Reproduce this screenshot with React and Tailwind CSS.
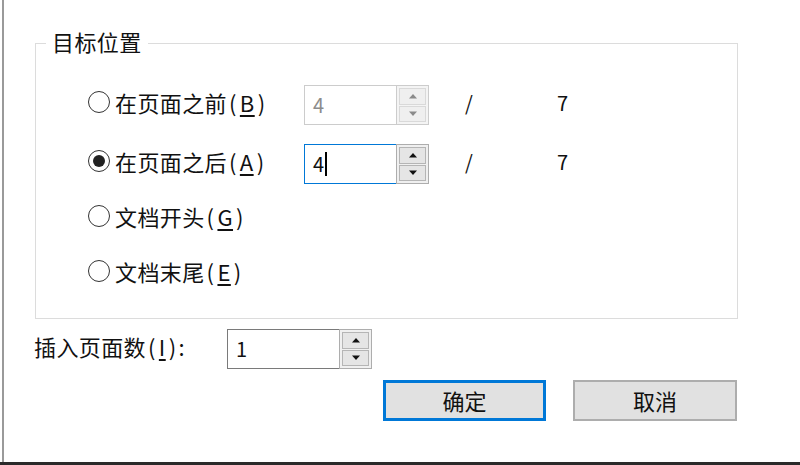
import React from "react";

const FONT = { fontFamily: '"Noto Sans CJK SC", "Noto Sans", sans-serif' };

function Tri({ up, disabled }) {
  return (
    <svg width="10" height="6" viewBox="0 0 10 6">
      {up ? (
        <polygon points="1,5.5 9,5.5 5,1" fill={disabled ? "#8a8a8a" : "#111"} />
      ) : (
        <polygon points="1,0.5 9,0.5 5,5" fill={disabled ? "#8a8a8a" : "#111"} />
      )}
    </svg>
  );
}

function Spin({ value, disabled, focused, width = "w-[125px]", caret }) {
  return (
    <div className={`flex h-[40px] ${width} bg-white`}>
      <div
        className={`flex-1 flex items-center pl-[8px] border ${
          focused ? "border-[#0078d7] border-r-0" : disabled ? "border-[#cccccc] border-r-0" : "border-[#7a7a7a] border-r-0"
        } text-[20px] ${disabled ? "text-[#8c8c8c]" : "text-[#111]"}`}
      >
        <span>{value}</span>
        {caret && <span className="inline-block w-[1.5px] h-[24px] bg-black ml-[1px]" />}
      </div>
      <div
        className={`w-[33px] flex flex-col gap-[1px] p-[2px] border ${
          disabled ? "border-[#cccccc] bg-[#f4f4f4]" : "border-[#adadad] bg-[#f0f0f0]"
        }`}
      >
        <div
          className={`flex-1 flex items-center justify-center border ${
            disabled ? "border-[#d9d9d9] bg-[#efefef]" : "border-[#b5b5b5] bg-[#e5e5e5]"
          }`}
        >
          <Tri up disabled={disabled} />
        </div>
        <div
          className={`flex-1 flex items-center justify-center border ${
            disabled ? "border-[#d9d9d9] bg-[#efefef]" : "border-[#b5b5b5] bg-[#e5e5e5]"
          }`}
        >
          <Tri disabled={disabled} />
        </div>
      </div>
    </div>
  );
}

function Radio({ checked }) {
  return (
    <span className="w-[22px] h-[22px] rounded-full border-[1.5px] border-[#333] bg-white flex items-center justify-center shrink-0">
      {checked && <span className="w-[12px] h-[12px] rounded-full bg-[#222]" />}
    </span>
  );
}

function Key({ k }) {
  return (
    <span>
      <span className="ml-[2px] mr-[3px]">(</span>
      <span className="underline underline-offset-[3px]">{k}</span>
      <span className="ml-[3px]">)</span>
    </span>
  );
}

function RadioLabel({ checked, text, keyChar }) {
  return (
    <div className="flex items-center gap-[5px] text-[22px] tracking-[0.4px] text-[#111] leading-none mb-[6px]">
      <Radio checked={checked} />
      <span>
        {text}
        <Key k={keyChar} />
      </span>
    </div>
  );
}

export default function App() {
  return (
    <div className="w-[800px] h-[465px] bg-white flex flex-col overflow-hidden" style={FONT}>
      <div className="flex-1 pl-[2px] flex">
        <div className="flex-1 border-l-2 border-[#9a9a9a] flex flex-col">
          <div className="pl-[31px] pt-[43px]">
            <div className="relative w-[703px] h-[276px] border border-[#dcdcdc] flex flex-col pl-[52px] pt-[41px]">
              <span className="absolute left-[10px] top-[-14px] px-[6px] bg-white text-[22px] tracking-[0.4px] leading-none text-[#111]">
                目标位置
              </span>
              <div className="flex items-center h-[40px]">
                <div className="w-[216px]">
                  <RadioLabel text="在页面之前" keyChar="B" />
                </div>
                <Spin value="4" disabled />
                <span className="ml-[36px] w-[60px] text-[20px] text-[#111] mb-[4px]">/</span>
                <span className="ml-[32px] text-[20px] text-[#111] mb-[4px]">7</span>
              </div>
              <div className="flex items-center h-[40px] mt-[19px]">
                <div className="w-[216px]">
                  <RadioLabel checked text="在页面之后" keyChar="A" />
                </div>
                <Spin value="4" focused caret />
                <span className="ml-[36px] w-[60px] text-[20px] text-[#111] mb-[4px]">/</span>
                <span className="ml-[32px] text-[20px] text-[#111] mb-[4px]">7</span>
              </div>
              <div className="flex items-center h-[40px] mt-[15px]">
                <RadioLabel text="文档开头" keyChar="G" />
              </div>
              <div className="flex items-center h-[40px] mt-[15px]">
                <RadioLabel text="文档末尾" keyChar="E" />
              </div>
            </div>
          </div>
          <div className="flex items-center pl-[30px] mt-[10px] h-[40px]">
            <span className="w-[193px] text-[22px] tracking-[0.4px] text-[#111] leading-none mb-[6px]">
              插入页面数<Key k="I" /><span className="ml-[2px]">:</span>
            </span>
            <Spin value="1" width="w-[145px]" />
          </div>
          <div className="flex pl-[379px] mt-[11px] gap-[27px]">
            <button className="w-[163px] h-[41px] border-[3px] border-[#0078d7] bg-[#e1e1e1] text-[22px] text-[#111] flex items-center justify-center">
              确定
            </button>
            <button className="w-[164px] h-[41px] border-2 border-[#adadad] bg-[#e1e1e1] text-[22px] text-[#111] flex items-center justify-center">
              取消
            </button>
          </div>
        </div>
      </div>
      <div className="h-[3px] bg-[#2a2a2a]" />
    </div>
  );
}
